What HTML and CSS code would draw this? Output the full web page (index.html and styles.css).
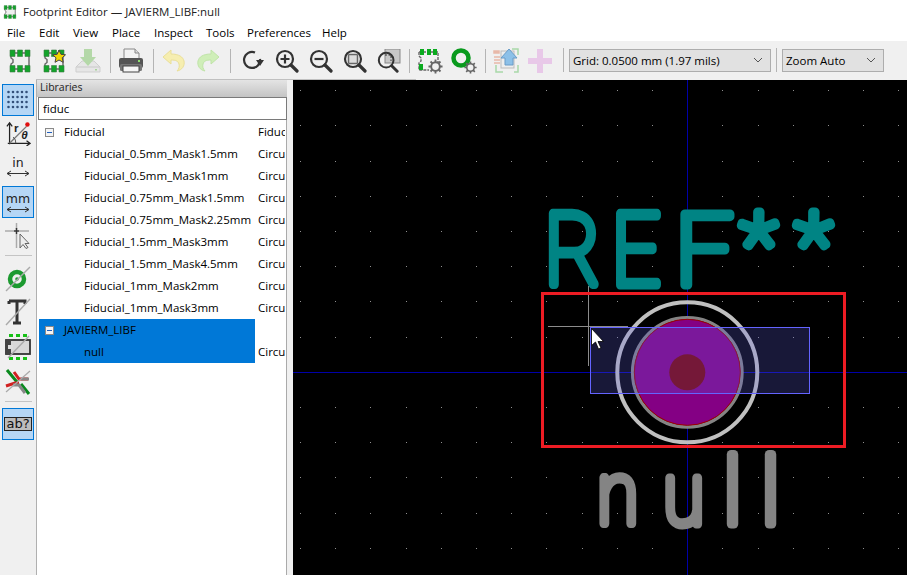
FILE: index.html
```html
<!DOCTYPE html>
<html lang="en">
<head>
    <meta charset="UTF-8">
    <title>Footprint Editor</title>
    <link rel="stylesheet" href="styles.css">
</head>
<body>

<svg class="defs" width="0" height="0">
    <symbol id="fp" viewBox="0 0 24 24">
        <path d="M3 4h18v16H3v-5l2-1.500v-3L3 9z" fill="#f0f0f0" stroke="#666" stroke-width="1.400"/>
        <path d="M2 1h5v6.500H2zM9.500 1h5v6.500h-5zM17 1h5v6.500h-5zM2 16.500h5V23H2zM9.500 16.500h5V23h-5zM17 16.500h5V23h-5z" fill="#12a42a" stroke="#3c7a44" stroke-width=".6"/>
    </symbol>
    <symbol id="mag" viewBox="0 0 24 24">
        <circle cx="10" cy="10" r="8" fill="none" stroke="#333" stroke-width="2.200"/>
        <path d="M16 16l6 6" stroke="#333" stroke-width="3.200" stroke-linecap="round"/>
    </symbol>
    <symbol id="gear" viewBox="0 0 16 16">
        <circle cx="8" cy="8" r="4.600" fill="none" stroke="#666" stroke-width="2"/>
        <path d="M8 .5v3M8 12.500v3M.5 8h3M12.500 8h3M2.700 2.700l2.100 2.100M11.200 11.200l2.100 2.100M13.300 2.700l-2.100 2.100M4.800 11.200l-2.100 2.100" stroke="#666" stroke-width="2"/>
    </symbol>
</svg>

<header class="titlebar">
    <svg class="app-icon" width="14" height="14"><use href="#fp"/></svg>
    <span>Footprint Editor — JAVIERM_LIBF:null</span>
</header>

<nav class="menubar">
    <span class="m-file">File</span>
    <span class="m-edit">Edit</span>
    <span class="m-view">View</span>
    <span class="m-place">Place</span>
    <span class="m-inspect">Inspect</span>
    <span class="m-tools">Tools</span>
    <span class="m-prefs">Preferences</span>
    <span>Help</span>
</nav>

<div class="toolbar">
    <button class="tool"><svg width="24" height="24"><use href="#fp"/></svg></button>
    <button class="tool">
        <svg width="24" height="24" viewBox="0 0 24 24">
            <use href="#fp"/>
            <path d="M17 1l2 4.300 4.500.5-3.300 3 1 4.500-4.200-2.300-4 2.300 1-4.500-3.300-3 4.500-.5z" fill="#f2d600" stroke="#444" stroke-width="1"/>
        </svg>
    </button>
    <button class="tool">
        <svg width="26" height="24" viewBox="0 0 26 24">
            <path d="M7 12L1 18v5h24v-5l-6-6z" fill="#e6e6e6" stroke="#cfcfcf"/>
            <path d="M1.500 18h23" stroke="#c8c8c8"/>
            <path d="M9 0h8v8h4l-8 9-8-9h4z" fill="#b4d8a8"/>
            <rect x="20" y="20" width="2" height="1.500" fill="#a6d49a"/>
        </svg>
    </button>
    <i class="sep"></i>
    <button class="tool">
        <svg width="26" height="26" viewBox="0 0 26 26">
            <path d="M6 1h11l4 4v6H6z" fill="#f4f4f4" stroke="#888"/>
            <path d="M17 1v4h4" fill="#ddd" stroke="#888"/>
            <rect x="1" y="10" width="24" height="10" rx="2" fill="#555"/>
            <rect x="2" y="16" width="22" height="7" rx="1.500" fill="#777"/>
            <rect x="5" y="18" width="16" height="6" fill="#f6f6f6" stroke="#444"/>
            <rect x="20" y="12" width="2" height="2" fill="#8fe070"/>
        </svg>
    </button>
    <i class="sep"></i>
    <button class="tool">
        <svg width="24" height="24" viewBox="0 0 24 24">
            <path d="M9 1L1 8l8 7v-4c5 0 7 1 8 4 .7 2.400 0 5-2 7 5-1 8-5 7-10-1-4-5-7-13-7z" fill="#f6eeb0" stroke="#eadf98"/>
        </svg>
    </button>
    <button class="tool">
        <svg width="24" height="24" viewBox="0 0 24 24">
            <path d="M15 1l8 7-8 7v-4c-5 0-7 1-8 4-.7 2.400 0 5 2 7-5-1-8-5-7-10 1-4 5-7 13-7z" fill="#cfeeb8" stroke="#c0e4a8"/>
        </svg>
    </button>
    <i class="sep sep-view"></i>
    <button class="tool">
        <svg width="24" height="24" viewBox="0 0 24 24">
            <path d="M19 10a8 8 0 1 1-5-6.500" fill="none" stroke="#333" stroke-width="2.200"/>
            <path d="M15 11h8l-4 6z" fill="#333"/>
        </svg>
    </button>
    <button class="tool">
        <svg width="24" height="24" viewBox="0 0 24 24">
            <use href="#mag"/>
            <path d="M5.500 10h9M10 5.500v9" stroke="#333" stroke-width="2.200"/>
        </svg>
    </button>
    <button class="tool">
        <svg width="24" height="24" viewBox="0 0 24 24">
            <use href="#mag"/>
            <path d="M5.500 10h9" stroke="#333" stroke-width="2.200"/>
        </svg>
    </button>
    <button class="tool">
        <svg width="24" height="24" viewBox="0 0 24 24">
            <use href="#mag"/>
            <rect x="5.500" y="5.500" width="9" height="9" rx="1" fill="#ddd" stroke="#666" stroke-width="1.500"/>
        </svg>
    </button>
    <button class="tool">
        <svg width="24" height="24" viewBox="0 0 24 24">
            <rect x="8" y="0" width="15" height="14" fill="#c8c8c8" stroke="#888"/>
            <use href="#mag" y="2" width="22" height="22"/>
            <path d="M8 6h6v6" fill="none" stroke="#333" stroke-dasharray="2 1.500"/>
        </svg>
    </button>
    <i class="sep sep-gear"></i>
    <button class="tool">
        <svg width="26" height="26" viewBox="0 0 26 26">
            <path d="M2 4h19v10M2 4v4l2 2v3l-2 2v7h10" fill="none" stroke="#666" stroke-width="1.400" stroke-dasharray="3 1"/>
            <path d="M3 1h4v6H3zM10 1h4v6h-4zM16 1h4v6h-4zM2 16h4v6H2z" fill="#0aaa1e"/>
            <use href="#gear" x="11" y="11" width="15" height="15"/>
        </svg>
    </button>
    <button class="tool">
        <svg width="26" height="26" viewBox="0 0 26 26">
            <circle cx="10" cy="10" r="7.500" fill="none" stroke="#0a9a1e" stroke-width="4.500"/>
            <use href="#gear" x="13" y="13" width="13" height="13"/>
        </svg>
    </button>
    <i class="sep sep-board"></i>
    <button class="tool">
        <svg width="26" height="26" viewBox="0 0 26 26">
            <path d="M1 3h5v2H1zM1 9h6M1 12h6M1 15h6" stroke="#e8b8a8" stroke-width="1.500" fill="#e8b8a8"/>
            <path d="M3 17v7h7M25 17v7h-4M19 1h6v6" fill="none" stroke="#a8d8a8" stroke-width="1.500"/>
            <rect x="8" y="3" width="13" height="17" fill="#eee" stroke="#bbb"/>
            <path d="M16 1l8 9h-4v7h-8v-7H8z" fill="#8cc0e8" stroke="#6a9cc8"/>
        </svg>
    </button>
    <button class="tool">
        <svg width="24" height="24" viewBox="0 0 24 24">
            <path d="M9 0h6v9h9v6h-9v9H9v-9H0V9h9z" fill="#e8c8e8"/>
        </svg>
    </button>
    <i class="sep sep-combo"></i>
    <div class="combo combo-grid">Grid: 0.0500 mm (1.97 mils)<svg class="chev" width="10" height="6"><path d="M1 1l4 4 4-4" fill="none" stroke="#555"/></svg></div>
    <i class="sep sep-zoom"></i>
    <div class="combo combo-zoom">Zoom Auto<svg class="chev" width="10" height="6"><path d="M1 1l4 4 4-4" fill="none" stroke="#555"/></svg></div>
</div>

<div class="workspace">
    <aside class="side-tools">
        <button class="side on">
            <svg width="22" height="20" viewBox="0 0 22 20" class="dots"><path d="M1.500 2h.01M6 2h.01M10.500 2h.01M15 2h.01M19.500 2h.01M1.500 7h.01M6 7h.01M10.500 7h.01M15 7h.01M19.500 7h.01M1.500 12h.01M6 12h.01M10.500 12h.01M15 12h.01M19.500 12h.01M1.500 17h.01M6 17h.01M10.500 17h.01M15 17h.01M19.500 17h.01"/></svg>
        </button>
        <button class="side">
            <svg width="25" height="25" viewBox="0 0 28 28">
                <path d="M4 26V3M1 6l3-4 3 4M2 25h24M23 22l4 3-4 3" fill="none" stroke="#222" stroke-width="1.400"/>
                <path d="M4 25L23 6" stroke="#777" stroke-width="1.500"/>
                <circle cx="24" cy="4" r="2.500" fill="#e01010"/>
                <path d="M11 25a8 8 0 0 0-3-7" fill="none" stroke="#444"/>
                <text x="9" y="12" class="glyph-r">r</text>
                <text x="17" y="20" class="glyph-t">θ</text>
            </svg>
        </button>
        <button class="side unit">
            <span>in</span>
            <svg width="24" height="7" viewBox="0 0 24 7"><path d="M1 3.500h22M5 1L1 3.500 5 6M19 1l4 2.500L19 6" fill="none" stroke="#333"/></svg>
        </button>
        <button class="side unit on">
            <span>mm</span>
            <svg width="24" height="7" viewBox="0 0 24 7"><path d="M1 3.500h22M5 1L1 3.500 5 6M19 1l4 2.500L19 6" fill="none" stroke="#333"/></svg>
        </button>
        <button class="side">
            <svg width="26" height="26" viewBox="0 0 26 26">
                <path d="M0 8h9M14 8h10M11.500 0v6M11.500 11v14" stroke="#aaa" stroke-width="1.500"/>
                <path d="M9 8h5M11.500 5v6" stroke="#333" stroke-width="1.500"/>
                <path d="M15 11v14l3-3.500 3 4 2-1-3-4h4z" fill="#eee" stroke="#666"/>
            </svg>
        </button>
        <i class="hsep"></i>
        <button class="side">
            <svg width="26" height="26" viewBox="0 0 26 26">
                <circle cx="12" cy="13" r="7" fill="none" stroke="#1c9a30" stroke-width="4.500"/>
                <circle cx="12" cy="13" r="1.800" fill="#1c9a30"/>
                <path d="M1 25L25 1" stroke="#aaa" stroke-width="1.400"/>
            </svg>
        </button>
        <button class="side">
            <svg width="26" height="28" viewBox="0 0 26 28">
                <path d="M4 3h16v3M4 3v3M12 3v21M8 25h8" fill="none" stroke="#333" stroke-width="3"/>
                <path d="M1 27L25 1" stroke="#aaa" stroke-width="1.400"/>
            </svg>
        </button>
        <button class="side gap-top">
            <svg width="26" height="26" viewBox="0 0 26 26">
                <path d="M4 0h4v3H4zM11 0h4v3h-4zM18 0h4v3h-4zM4 23h4v3H4zM11 23h4v3h-4zM18 23h4v3h-4z" fill="#16c016"/>
                <rect x="1" y="6" width="24" height="14" fill="#d8d8d8" stroke="#333" stroke-width="1.800"/>
                <path d="M1 6h5v14H1z" fill="#444"/>
                <rect x="3" y="11" width="5" height="4" fill="#ddd"/>
                <path d="M3 24L24 2" stroke="#aaa" stroke-width="1.400"/>
            </svg>
        </button>
        <button class="side gap-top">
            <svg width="26" height="26" viewBox="0 0 26 26">
                <path d="M2 1l10 12M24 25l-8-10" fill="none" stroke="#0a8a1e" stroke-width="3"/>
                <path d="M9 3l5 7h9" fill="none" stroke="#d02020" stroke-width="3"/>
                <path d="M1 17l9-3h4" fill="none" stroke="#d02020" stroke-width="3"/>
                <path d="M16 10h8" fill="none" stroke="#888" stroke-width="3"/>
                <path d="M8 16h6l6 8" fill="none" stroke="#888" stroke-width="3"/>
                <path d="M1 23L25 2" stroke="#aaa" stroke-width="1.200"/>
            </svg>
        </button>
        <i class="hsep"></i>
        <button class="side on"><span class="abq">ab?</span></button>
    </aside>

    <section class="libraries">
        <div class="caption">Libraries</div>
        <div class="search">fiduc</div>
        <div class="tree">
            <div class="row parent">
                <span class="name"><i class="expander"></i>Fiducial</span><span class="desc">Fiduc</span>
            </div>
            <div class="row"><span class="name">Fiducial_0.5mm_Mask1.5mm</span><span class="desc">Circu</span></div>
            <div class="row"><span class="name">Fiducial_0.5mm_Mask1mm</span><span class="desc">Circu</span></div>
            <div class="row"><span class="name">Fiducial_0.75mm_Mask1.5mm</span><span class="desc">Circu</span></div>
            <div class="row"><span class="name">Fiducial_0.75mm_Mask2.25mm</span><span class="desc">Circu</span></div>
            <div class="row"><span class="name">Fiducial_1.5mm_Mask3mm</span><span class="desc">Circu</span></div>
            <div class="row"><span class="name">Fiducial_1.5mm_Mask4.5mm</span><span class="desc">Circu</span></div>
            <div class="row"><span class="name">Fiducial_1mm_Mask2mm</span><span class="desc">Circu</span></div>
            <div class="row"><span class="name">Fiducial_1mm_Mask3mm</span><span class="desc">Circu</span></div>
            <div class="row parent selected">
                <span class="name"><i class="expander"></i>JAVIERM_LIBF</span><span class="desc"></span>
            </div>
            <div class="row selected"><span class="name">null</span><span class="desc">Circu</span></div>
        </div>
    </section>

    <main class="canvas">
        <svg viewBox="293 80 614 495" width="614" height="495">
            <rect x="293" y="80" width="614" height="495" fill="#000"/>
            <!-- grid dots, one dashed line per row -->
            <path class="grid-dots" d="M300 90.500H907M300 125.500H907M300 161.500H907M300 196.500H907M300 231.500H907M300 266.500H907M300 301.500H907M300 337.500H907M300 372.500H907M300 407.500H907M300 442.500H907M300 477.500H907M300 513.500H907M300 548.500H907"/>
            <path d="M293 372.500H907M687.500 80V575" stroke="#0000a8"/>

            <circle class="ring" cx="687.300" cy="372.300" r="70"/>
            <circle class="ring-inner" cx="687.300" cy="372.300" r="54.700"/>
            <circle class="pad" cx="687.300" cy="372.300" r="53"/>
            <circle class="drill" cx="687.300" cy="372.300" r="18"/>
            <rect class="courtyard" x="590.500" y="327.500" width="219" height="66"/>

            <g transform="translate(544.500 285) scale(.86 1)">
                <text class="ref" x="0 78" y="0">RE</text>
            </g>
            <g transform="translate(675 285) scale(1.020 1)">
                <text class="ref" y="0">F</text>
            </g>
            <text class="ref star" x="740 795" y="274">**</text>

            <g transform="translate(597 524) scale(.87 1)">
                <text class="val" x="0 76">nu</text>
            </g>
            <text class="val val-tall" x="723 761" y="524">ll</text>

            <path d="M548 326.500H628M588.500 286V366" stroke="#8c8c8c"/>
            <rect class="annotation" x="542.500" y="293.500" width="302" height="153"/>
            <path d="M591.500 328.500v17l4-3.500 3 7 2.500-1-3-6.500h5.500z" fill="#fff" stroke="#000" stroke-width=".8"/>
        </svg>
    </main>
</div>

</body>
</html>
```

FILE: styles.css
```css
/* Footprint editor window */
body {
    margin: 0;
    width: 907px;
    height: 575px;
    overflow: hidden;
    background-color: #f0f0f0;
    font-family: "Open Sans", "Liberation Sans", sans-serif;
    font-size: 11.5px;
    color: #000;
}
.defs {
    display: block;
    height: 0;
}
.titlebar {
    height: 23px;
    background-color: #fff;
    display: flex;
    align-items: center;
    gap: 6px;
    padding-left: 3px;
    color: #222;
}
.menubar {
    height: 18px;
    padding-top: 1px;
    box-sizing: border-box;
    background-color: #fff;
    display: flex;
    align-items: center;
    padding-left: 7px;
}
.m-file { width: 32px; }
.m-edit { width: 34px; }
.m-view { width: 39px; }
.m-place { width: 42px; }
.m-inspect { width: 52px; }
.m-tools { width: 41px; }
.m-prefs { width: 75px; }

.toolbar {
    height: 39px;
    box-sizing: border-box;
    display: flex;
    align-items: center;
    padding: 1px 0 0 3px;
    position: relative;
}
.toolbar::after {
    content: "";
    position: absolute;
    left: 36px;
    bottom: 0;
    width: 380px;
    height: 1px;
    background-color: #c0c0c0;
}
.tool {
    width: 34px;
    height: 34px;
    padding: 0;
    border: none;
    background: none;
    display: flex;
    align-items: center;
    justify-content: center;
    flex-shrink: 0;
}
.sep {
    width: 1px;
    height: 24px;
    background-color: #b4b4b4;
    margin: 0 3px 0 5px;
    flex-shrink: 0;
}
.sep-view { margin-right: 5px; }
.sep-gear { margin-left: 3px; }
.sep-board { margin-left: 4px; }
.sep-combo { margin: 0 5px 2px 6px; }
.sep-zoom { margin: 0 5px 2px; }
.combo {
    height: 23px;
    box-sizing: border-box;
    background-color: #e1e1e1;
    border: 1px solid #adadad;
    display: flex;
    align-items: center;
    justify-content: space-between;
    padding: 0 7px 0 3px;
    margin-bottom: 2px;
    flex-shrink: 0;
}
.combo-grid { width: 202px; }
.combo-zoom { width: 102px; }

.workspace {
    display: flex;
    height: 495px;
}
.side-tools {
    width: 36px;
    flex-shrink: 0;
    border-right: 1px solid #b0b0b0;
    display: flex;
    flex-direction: column;
    align-items: center;
    padding-top: 4px;
}
.side {
    width: 32px;
    height: 33px;
    padding: 0;
    border: 1px solid transparent;
    background: none;
    display: flex;
    flex-direction: column;
    align-items: center;
    justify-content: center;
    flex-shrink: 0;
}
.side.on {
    height: 32px;
    background-color: #b5d6f5;
    border-color: #0078d7;
    margin: 0 0 1px;
}
.gap-top {
    margin-top: 2px;
}
.unit {
    font-size: 12.500px;
    line-height: 13px;
    gap: 1px;
    color: #222;
    font-family: "DejaVu Sans", sans-serif;
}
.side.unit.on {
    margin-top: 3px;
}
.dots path {
    stroke: #33507a;
    stroke-width: 2.600;
    stroke-linecap: round;
}
.glyph-r, .glyph-t {
    font-family: "Liberation Sans", sans-serif;
    font-size: 13px;
    font-weight: bold;
    fill: #222;
}
.glyph-t {
    font-style: italic;
}
.hsep {
    width: 27px;
    height: 1px;
    background-color: #c4c4c4;
    margin: 3px 0 6px;
    flex-shrink: 0;
}
.abq {
    background-color: #bcbcbc;
    border: 1px solid #222;
    font-family: "DejaVu Sans", sans-serif;
    font-size: 13px;
    line-height: 12px;
    padding: 0 1px;
    color: #111;
}

.libraries {
    width: 250px;
    flex-shrink: 0;
    background-color: #fff;
    display: flex;
    flex-direction: column;
}
.caption {
    height: 17px;
    box-sizing: border-box;
    padding-left: 3px;
    font-size: 10.500px;
    line-height: 14px;
    background: linear-gradient(#e4e4e4, #c4c4c4);
    color: #222;
}
.search {
    height: 23px;
    box-sizing: border-box;
    margin-left: 1px;
    border: 1px solid #7a7a7a;
    padding-left: 4px;
    line-height: 21px;
}
.tree {
    flex: 1;
    padding: 1px 0 0 2px;
    border-right: 1px solid #aaa;
    overflow: hidden;
}
.row {
    height: 22px;
    line-height: 22px;
    display: flex;
    white-space: nowrap;
}
.name {
    width: 216px;
    box-sizing: border-box;
    padding-left: 45px;
    flex-shrink: 0;
    display: block;
}
.parent .name {
    padding-left: 25px;
    position: relative;
}
.desc {
    width: 27px;
    margin-left: 3px;
    overflow: hidden;
    background-color: #fff;
}
.selected .name {
    background-color: #0078d7;
}
.expander {
    position: absolute;
    left: 6px;
    top: 7px;
    width: 7px;
    height: 7px;
    border: 1px solid #8a8a8a;
    background: linear-gradient(#1f5fbf, #1f5fbf) center / 5px 1px no-repeat #f4f4f4;
}
.canvas {
    margin-left: 6px;
    width: 614px;
    height: 495px;
}
.canvas svg {
    display: block;
}
.grid-dots {
    stroke: #909090;
    stroke-width: 1;
    stroke-dasharray: 1 34.200;
    shape-rendering: crispEdges;
}
.ring {
    fill: none;
    stroke: #c0c0c0;
    stroke-width: 4;
}
.ring-inner {
    fill: none;
    stroke: #848484;
    stroke-width: 3.400;
}
.pad {
    fill: #840084;
    stroke: #a00000;
    stroke-width: 1;
}
.drill {
    fill: #7c0000;
}
.courtyard {
    fill: rgba(96, 96, 224, 0.25);
    stroke: #6464ff;
}
.annotation {
    fill: none;
    stroke: #ed1c24;
    stroke-width: 3;
}
.ref, .val {
    font-family: Roboto, sans-serif;
    font-weight: 100;
    stroke-linejoin: round;
    stroke-linecap: round;
}
.ref {
    font-size: 100px;
    fill: #008484;
    stroke: #008484;
    stroke-width: 9;
}
.star {
    font-size: 88px;
}
.val {
    font-size: 87px;
    fill: #848484;
    stroke: #848484;
    stroke-width: 9;
}
.val-tall {
    font-size: 92px;
}
```
